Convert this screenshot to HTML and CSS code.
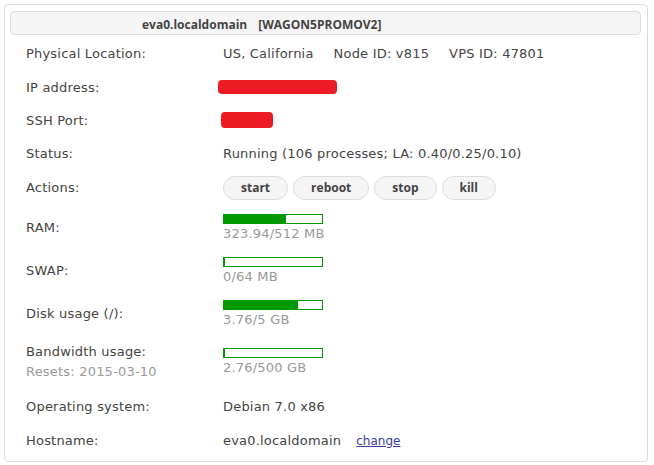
FILE: index.html
```html
<!DOCTYPE html>
<html>
<head>
<meta charset="utf-8">
<link rel="stylesheet" href="styles.css">
</head>
<body>
<div class="panel">
  <div class="title">eva0.localdomain<span class="plan">[WAGON5PROMOV2]</span></div>
  <div class="grid">
    <div class="label">Physical Location:</div>
    <div class="value"><span>US, California</span><span class="sep">Node ID: v815</span><span class="sep">VPS ID: 47801</span></div>

    <div class="label">IP address:</div>
    <div class="value"><span class="redact redact-ip"></span></div>

    <div class="label">SSH Port:</div>
    <div class="value"><span class="redact redact-ssh"></span></div>

    <div class="label">Status:</div>
    <div class="value">Running (106 processes; LA: 0.40/0.25/0.10)</div>

    <div class="label">Actions:</div>
    <div class="value buttons">
      <button class="btn">start</button>
      <button class="btn">reboot</button>
      <button class="btn">stop</button>
      <button class="btn">kill</button>
    </div>

    <div class="label">RAM:</div>
    <div class="value usage">
      <div class="bar"><div class="fill" style="width:63.3%"></div></div>
      <div class="muted">323.94/512 MB</div>
    </div>

    <div class="label">SWAP:</div>
    <div class="value usage">
      <div class="bar"><div class="fill" style="width:1%"></div></div>
      <div class="muted">0/64 MB</div>
    </div>

    <div class="label">Disk usage (/):</div>
    <div class="value usage">
      <div class="bar"><div class="fill" style="width:75.2%"></div></div>
      <div class="muted">3.76/5 GB</div>
    </div>

    <div class="label two-line">Bandwidth usage:<br><span class="muted">Resets: 2015-03-10</span></div>
    <div class="value usage">
      <div class="bar"><div class="fill" style="width:1%"></div></div>
      <div class="muted">2.76/500 GB</div>
    </div>

    <div class="label">Operating system:</div>
    <div class="value">Debian 7.0 x86</div>

    <div class="label">Hostname:</div>
    <div class="value">eva0.localdomain<a class="change" href="#">change</a></div>
  </div>
</div>
</body>
</html>
```

FILE: styles.css
```css
html, body {
  margin: 0;
  padding: 0;
  background: #ffffff;
}

body {
  font-family: "DejaVu Sans", Verdana, sans-serif;
  font-size: 13px;
  letter-spacing: 0.2px;
  color: #444444;
}

.panel {
  margin: 4px 0 0 4px;
  width: 644px;
  height: 458px;
  border: 1px solid #dddddd;
  border-radius: 4px;
  padding: 6px 6px 0 5px;
  box-sizing: border-box;
}

.title {
  height: 24px;
  box-sizing: border-box;
  border: 1px solid #dddddd;
  border-radius: 4px;
  background: #f5f5f5;
  font-family: "Open Sans", sans-serif;
  font-weight: 700;
  font-size: 12px;
  letter-spacing: 0;
  color: #444444;
  line-height: 22px;
  padding: 2px 0 0 131px;
}

.plan {
  margin-left: 11px;
}

.grid {
  display: grid;
  grid-template-columns: 213px 1fr;
  grid-template-rows: 34px 33px 33px 34px 34px 46px 40px 46px 50px 40px 28px;
  align-items: center;
  margin-top: 2px;
}

.label {
  padding-left: 16px;
  line-height: 16px;
}

.label.two-line {
  line-height: 20px;
}

.value {
  line-height: 16px;
  display: flex;
  align-items: center;
}

.sep {
  margin-left: 20px;
}

.redact {
  display: block;
  background: #ed1c24;
  border-radius: 4px;
}

.redact-ip {
  width: 119px;
  height: 14px;
  margin-left: -5px;
  margin-top: -2px;
}

.redact-ssh {
  width: 52px;
  height: 16px;
  margin-left: -2px;
  margin-top: -1px;
}

.buttons {
  gap: 5px;
}

.btn {
  height: 24px;
  padding: 0 17px;
  border: 1px solid #dddddd;
  border-radius: 12px;
  background: #f5f5f5;
  font-family: "Open Sans", sans-serif;
  font-weight: 700;
  font-size: 12px;
  color: #444444;
  line-height: 22px;
  margin: 0;
}

.btn-wide {
  padding: 0 19px;
}

.usage {
  flex-direction: column;
  align-items: flex-start;
}

.bar {
  width: 100px;
  height: 10px;
  box-sizing: border-box;
  border: 1px solid #009900;
  background: #ffffff;
}

.fill {
  height: 100%;
  background: #009900;
}

.usage .muted {
  margin-top: 2px;
}

.muted {
  color: #999999;
}

.change {
  margin-left: 15px;
  font-size: 12px;
  color: #3b3ba0;
  text-decoration: underline;
  letter-spacing: 0;
}
```
